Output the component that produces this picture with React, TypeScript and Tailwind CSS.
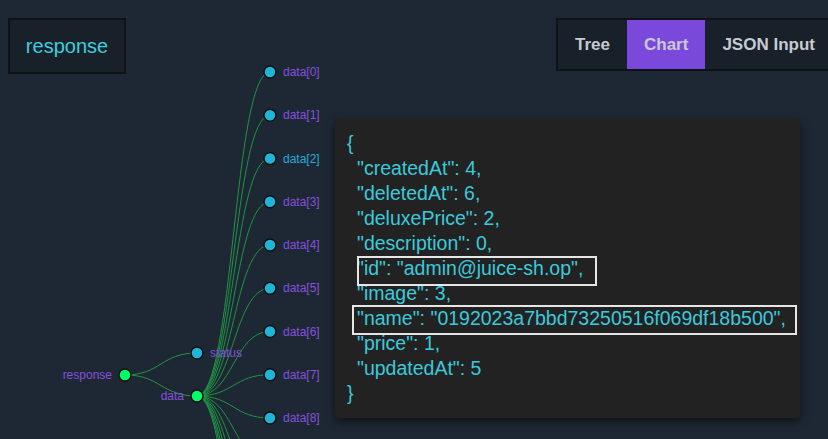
import React from "react";

const ROOT = { x: 125, y: 375 };
const STATUS = { x: 197, y: 353 };
const DATA = { x: 197, y: 396 };
const CHILD_X = 270;
const CHILD_TOP = 72;
const CHILD_STEP = 43.25;
const CHILD_COUNT = 16;

const children = Array.from({ length: CHILD_COUNT }, (_, i) => ({
  x: CHILD_X,
  y: CHILD_TOP + i * CHILD_STEP,
  label: `data[${i}]`,
}));
// only the first nine fit in the view, the rest just leave their links
const visible = children.filter((c) => c.y < 430);

function link(a: { x: number; y: number }, b: { x: number; y: number }) {
  const mx = (a.x + b.x) / 2;
  return `M${a.x},${a.y} C${mx},${a.y} ${mx},${b.y} ${b.x},${b.y}`;
}

function TreeChart() {
  return (
    <svg className="absolute inset-0" width={828} height={439} viewBox="0 0 828 439">
      <g fill="none" stroke="#1f9443" strokeWidth={1}>
        <path d={link(ROOT, STATUS)} />
        <path d={link(ROOT, DATA)} />
        {children.map((c) => (
          <path key={c.label} d={link(DATA, c)} />
        ))}
      </g>
      <g stroke="#0b0f14" strokeWidth={1.5}>
        <circle cx={ROOT.x} cy={ROOT.y} r={6} fill="#00ff66" />
        <circle cx={DATA.x} cy={DATA.y} r={6} fill="#00ff66" />
        <circle cx={STATUS.x} cy={STATUS.y} r={6} fill="#1fb5d6" />
        {visible.map((c) => (
          <circle key={c.label} cx={c.x} cy={c.y} r={6} fill="#1fb5d6" />
        ))}
      </g>
      <g fontSize={12} fontFamily="'Liberation Sans', Arial, sans-serif" fill="#8450df">
        <text x={ROOT.x - 13} y={ROOT.y} dy="0.35em" textAnchor="end">
          response
        </text>
        <text x={DATA.x - 13} y={DATA.y} dy="0.35em" textAnchor="end">
          data
        </text>
        <text x={STATUS.x + 13} y={STATUS.y} dy="0.35em">
          status
        </text>
        {visible.map((c, i) => (
          <text
            key={c.label}
            x={c.x + 13}
            y={c.y}
            dy="0.35em"
            fill={i === 2 ? "#2aa9d9" : undefined}
          >
            {c.label}
          </text>
        ))}
      </g>
    </svg>
  );
}

const lines = [
  '"createdAt": 4,',
  '"deletedAt": 6,',
  '"deluxePrice": 2,',
  '"description": 0,',
  '"id": "admin@juice-sh.op",',
  '"image": 3,',
  '"name": "0192023a7bbd73250516f069df18b500",',
  '"price": 1,',
  '"updatedAt": 5',
];

function JsonTooltip() {
  return (
    <div className="absolute left-[335px] top-[118px] h-[300px] w-[465px] rounded bg-[#222222] pl-3 pt-[13px] text-[19.5px] leading-[25px] text-[#3cc9dc] shadow-[0_4px_10px_rgba(0,0,0,0.55)]">
      <div>{"{"}</div>
      {lines.map((l) => (
        <div key={l} className="whitespace-pre pl-[10px]">
          {l}
        </div>
      ))}
      <div>{"}"}</div>
      {/* highlight frames */}
      <div className="absolute left-[22px] top-[138px] h-[30px] w-[240px] border-2 border-[#e6e6e6]" />
      <div className="absolute left-[17px] top-[187px] h-[30px] w-[445px] border-2 border-[#e6e6e6]" />
    </div>
  );
}

export default function App() {
  const tabs = ["Tree", "Chart", "JSON Input"];
  return (
    <div className="relative h-[439px] w-[828px] overflow-hidden bg-[#1e2834] font-['Liberation_Sans',Arial,sans-serif]">
      <TreeChart />
      <div className="relative flex items-start px-2 pt-[18px]">
        <div className="flex h-[56px] w-[118px] shrink-0 items-center justify-center border-2 border-[#0f1217] bg-[#18202a] text-[20px] text-[#3ccfdf]">
          response
        </div>
        <div className="ml-[430px] flex h-[53px] shrink-0 border-2 border-[#0f1217] bg-[#18202a]">
          {tabs.map((t) => (
            <div
              key={t}
              className={
                t === "Chart"
                  ? "flex items-center bg-[#7b48dc] px-[17px] text-[17px] font-bold text-[#c8cad2]"
                  : "flex items-center px-[17px] text-[17px] font-bold text-[#c8cad2]"
              }
            >
              {t}
            </div>
          ))}
        </div>
      </div>
      <JsonTooltip />
    </div>
  );
}
